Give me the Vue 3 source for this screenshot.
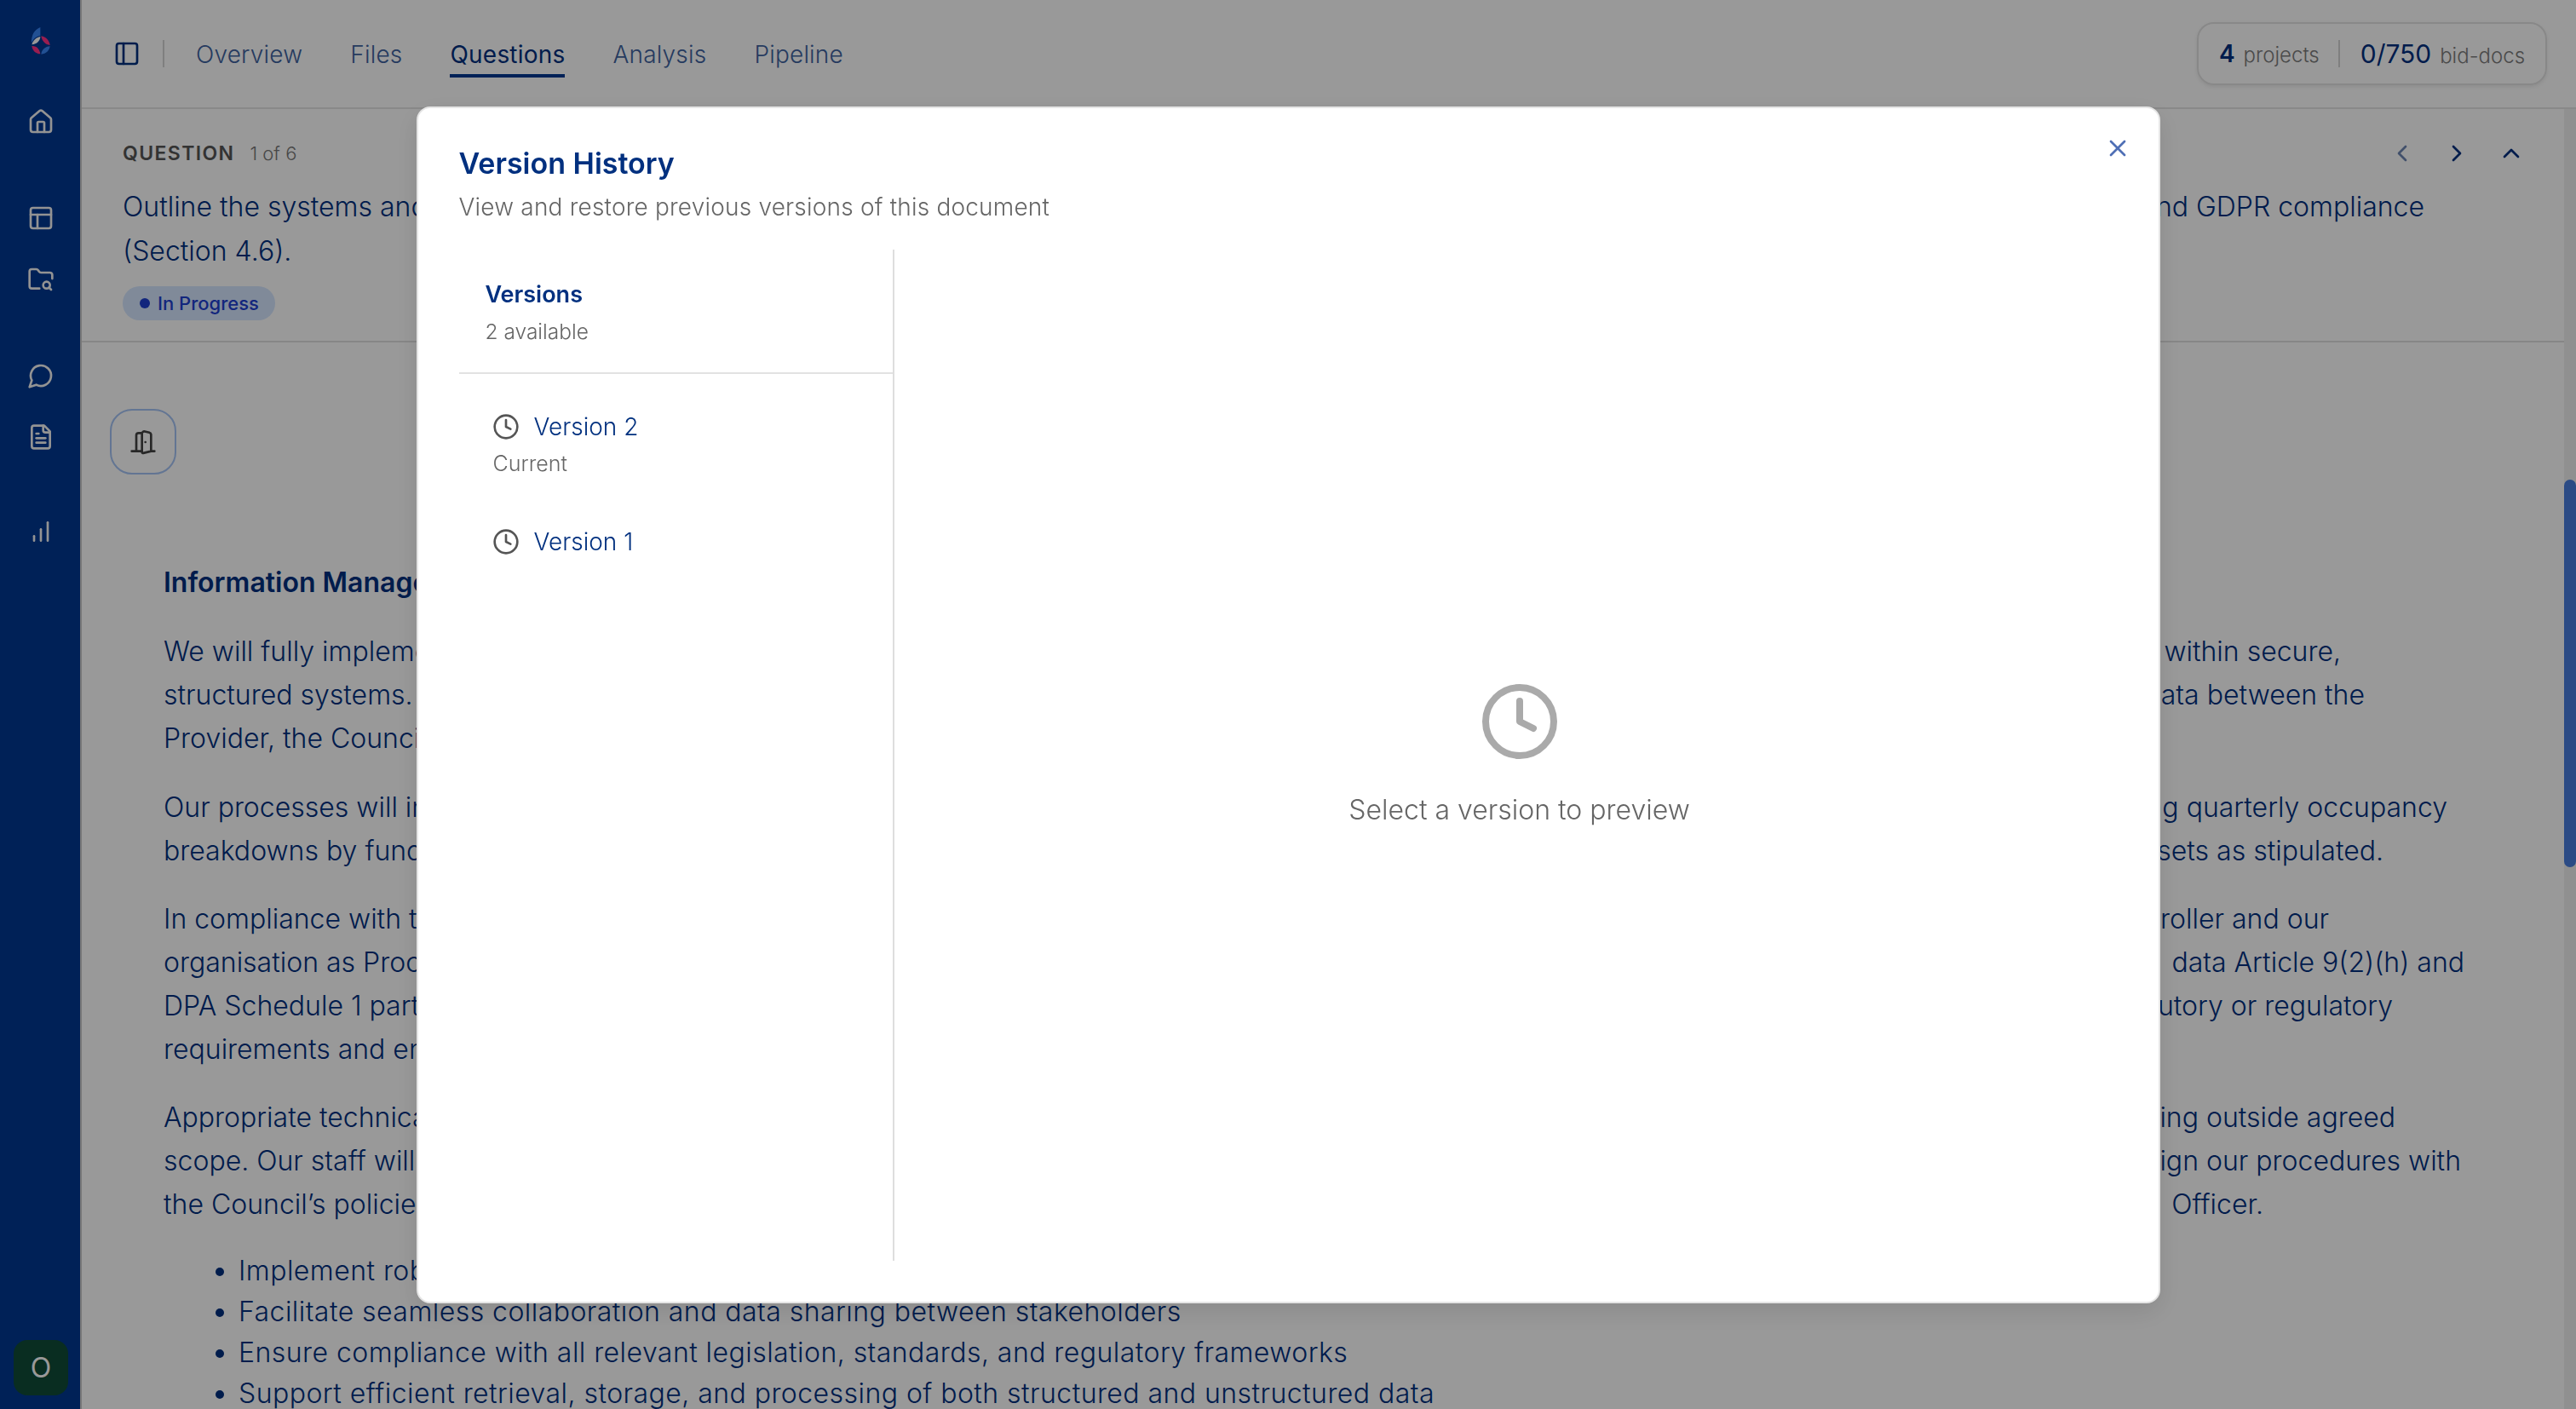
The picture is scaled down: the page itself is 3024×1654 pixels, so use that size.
<script setup>
const tabs = ['Overview', 'Files', 'Questions', 'Analysis', 'Pipeline']
const paragraphs = [
  [
    { l: 'We will fully implement', r: 'within secure,', end: 2748 },
    { l: 'structured systems. We', r: 'data between the', end: 2776 },
    { l: 'Provider, the Council', r: '', end: 2776 }
  ],
  [
    { l: 'Our processes will include', r: 'ing quarterly occupancy', end: 2873 },
    { l: 'breakdowns by funding', r: 'assets as stipulated.', end: 2798 }
  ],
  [
    { l: 'In compliance with the', r: 'Controller and our', end: 2734 },
    { l: 'organisation as Processor', r: 'data Article 9(2)(h) and', end: 2893 },
    { l: 'DPA Schedule 1 part', r: 'statutory or regulatory', end: 2809 },
    { l: 'requirements and ensure', r: '', end: 2809 }
  ],
  [
    { l: 'Appropriate technical', r: 'sing outside agreed', end: 2812 },
    { l: 'scope. Our staff will', r: 'align our procedures with', end: 2889 },
    { l: 'the Council’s policies', r: 'Officer.', end: 2657 }
  ]
]
const bullets = [
  'Implement robust systems',
  'Facilitate seamless collaboration and data sharing between stakeholders',
  'Ensure compliance with all relevant legislation, standards, and regulatory frameworks',
  'Support efficient retrieval, storage, and processing of both structured and unstructured data'
]
const pad = (end, edge = 3024) => ({ paddingRight: edge - end + 'px' })
</script>

<template>
  <div class="app">
    <aside class="sidebar">
      <div class="logo">
        <svg width="80" height="80" viewBox="0 0 240 240">
          <path d="M112 66C92 74 80 92 81 122C86 108 98 98 112 96Z" fill="#3a86f5" />
          <path d="M82 127C86 112 97 102 112 99C112 112 100 126 82 127Z" fill="#fff" />
          <path d="M115 97C132 99 143 112 146 129C130 128 117 114 115 97Z" fill="#ff3285" />
          <path d="M82 132C100 131 110 144 112 160C96 160 84 148 82 132Z" fill="#ff3285" />
          <path d="M146 133C144 148 132 160 115 161C116 146 130 133 146 133Z" fill="#3a86f5" />
        </svg>
      </div>
      <nav class="side-nav">
        <div class="side-group">
          <span class="side-item"><svg class="i32" viewBox="0 0 24 24"><path d="M15 21v-8a1 1 0 0 0-1-1h-4a1 1 0 0 0-1 1v8" /><path d="M3 10a2 2 0 0 1 .709-1.528l7-5.999a2 2 0 0 1 2.582 0l7 5.999A2 2 0 0 1 21 10v9a2 2 0 0 1-2 2H5a2 2 0 0 1-2-2z" /></svg></span>
        </div>
        <div class="side-group">
          <span class="side-item"><svg class="i32" viewBox="0 0 24 24"><rect x="3" y="3" width="18" height="18" rx="2" /><path d="M3 9h18" /><path d="M9 21V9" /></svg></span>
          <span class="side-item"><svg class="i32" viewBox="0 0 24 24"><path d="M10.7 20H4a2 2 0 0 1-2-2V5a2 2 0 0 1 2-2h3.9a2 2 0 0 1 1.69.9l.81 1.2a2 2 0 0 0 1.67.9H20a2 2 0 0 1 2 2v3.3" /><circle cx="17" cy="17" r="3" /><path d="m21 21-1.9-1.9" /></svg></span>
        </div>
        <div class="side-group">
          <span class="side-item"><svg class="i32" viewBox="0 0 24 24"><path d="M7.9 20A9 9 0 1 0 4 16.1L2 22Z" /></svg></span>
          <span class="side-item"><svg class="i32" viewBox="0 0 24 24"><path d="M15 2H6a2 2 0 0 0-2 2v16a2 2 0 0 0 2 2h12a2 2 0 0 0 2-2V7Z" /><path d="M14 2v4a2 2 0 0 0 2 2h4" /><path d="M10 9H8" /><path d="M16 13H8" /><path d="M16 17H8" /></svg></span>
        </div>
        <div class="side-group side-last">
          <span class="side-item"><svg class="i32" viewBox="0 0 24 24"><path d="M6 20v-4" /><path d="M12 20v-10" /><path d="M18 20V4" /></svg></span>
        </div>
      </nav>
      <div class="avatar">O</div>
    </aside>

    <main class="main">
      <header class="topbar">
        <svg class="i32 dark" viewBox="0 0 24 24"><rect x="3" y="3" width="18" height="18" rx="2" /><path d="M9 3v18" /></svg>
        <span class="top-sep"></span>
        <nav class="tabs">
          <a v-for="t in tabs" :key="t" class="tab" :class="{ active: t === 'Questions' }">{{ t }}</a>
        </nav>
        <div class="stats">
          <span class="stat"><b class="num">4</b> <span class="unit">projects</span></span>
          <span class="stat-sep"></span>
          <span class="stat"><span class="num wide">0/750</span> <span class="unit">bid-docs</span></span>
        </div>
      </header>

      <section class="question">
        <div class="q-head">
          <div class="q-label"><span class="q-word">QUESTION</span><span class="q-count">1 of 6</span></div>
          <div class="q-arrows">
            <svg class="i32 muted" viewBox="0 0 24 24"><path d="m15 18-6-6 6-6" /></svg>
            <svg class="i32 dark" viewBox="0 0 24 24"><path d="m9 18 6-6-6-6" /></svg>
            <svg class="i32 dark" viewBox="0 0 24 24"><path d="m18 15-6-6-6 6" /></svg>
          </div>
        </div>
        <div class="q-title">
          <div class="row" :style="pad(2846, 2964)"><span>Outline the systems and</span><span>and GDPR compliance</span></div>
          <div class="row"><span>(Section 4.6).</span></div>
        </div>
        <span class="pill"><i class="dot"></i>In Progress</span>
      </section>

      <section class="content">
        <button class="door">
          <svg class="i32" viewBox="0 0 24 24"><path d="M11 20H2" /><path d="M11 4.562v16.157a1 1 0 0 0 1.242.97L19 20V5.562a2 2 0 0 0-1.515-1.94l-4-1A2 2 0 0 0 11 4.561z" /><path d="M11 4H8a2 2 0 0 0-2 2v14" /><path d="M14 12h.01" /><path d="M22 20h-3" /></svg>
        </button>
        <article class="doc">
          <h3 class="doc-h">Information Management</h3>
          <div v-for="(p, i) in paragraphs" :key="i" class="para">
            <div v-for="(ln, j) in p" :key="j" class="row" :style="pad(ln.end)">
              <span>{{ ln.l }}</span><span>{{ ln.r }}</span>
            </div>
          </div>
          <ul class="list">
            <li v-for="b in bullets" :key="b">{{ b }}</li>
          </ul>
        </article>
      </section>
      <div class="scroll-track"><div class="scroll-thumb"></div></div>
    </main>

    <div class="overlay">
      <div class="modal">
        <svg class="close" viewBox="0 0 24 24"><path d="M18 6 6 18" /><path d="m6 6 12 12" /></svg>
        <h2 class="m-title">Version History</h2>
        <p class="m-sub">View and restore previous versions of this document</p>
        <div class="m-body">
          <div class="m-left">
            <div class="v-head">
              <div class="v-h-title">Versions</div>
              <div class="v-h-sub">2 available</div>
            </div>
            <div class="v-list">
              <div class="v-item">
                <div class="v-line">
                  <svg class="i32 grey" viewBox="0 0 24 24"><circle cx="12" cy="12" r="10" /><path d="M12 6v6l4 2" /></svg>
                  <span>Version 2</span>
                </div>
                <div class="v-sub">Current</div>
              </div>
              <div class="v-item">
                <div class="v-line">
                  <svg class="i32 grey" viewBox="0 0 24 24"><circle cx="12" cy="12" r="10" /><path d="M12 6v6l4 2" /></svg>
                  <span>Version 1</span>
                </div>
              </div>
            </div>
          </div>
          <div class="m-right">
            <svg class="big-clock" viewBox="0 0 24 24"><circle cx="12" cy="12" r="10" /><path d="M12 6v6l4 2" /></svg>
            <p class="m-hint">Select a version to preview</p>
          </div>
        </div>
      </div>
    </div>
  </div>
</template>

<style>
html, body { margin: 0; padding: 0; background: #fff; }
</style>

<style scoped>
* { box-sizing: border-box; }
.app {
  width: 3024px; height: 1654px; display: flex; overflow: hidden;
  font-family: Inter, "Liberation Sans", sans-serif; font-weight: 300; color: #00307f; background: #fff;
}
svg { fill: none; stroke: currentColor; stroke-width: 2; stroke-linecap: round; stroke-linejoin: round; flex: none; }
.i32 { width: 32px; height: 32px; }
.dark { color: #00307f; }
.muted { color: #6f86b2; }
.grey { color: #555; }

.sidebar {
  width: 96px; flex: none; background: #003791; border-right: 2px solid #c8c8c8;
  display: flex; flex-direction: column; color: #f5f5f5;
}
.logo { height: 96px; padding: 10px 0 0 10px; }
.logo svg { stroke: none; display: block; }
.side-nav { margin-top: 11px; display: flex; flex-direction: column; gap: 41px; }
.side-group { display: flex; flex-direction: column; }
.side-last { margin-top: -2px; }
.side-item { height: 72px; width: 96px; display: flex; align-items: center; justify-content: center; }
.avatar {
  margin: auto 0 16px 16px; width: 64px; height: 65px; border-radius: 16px;
  background: #104c38; color: #fff; display: flex; align-items: center; justify-content: center;
  font-size: 32px; font-weight: 400;
}

.main { flex: 1; min-width: 0; display: flex; flex-direction: column; position: relative; }
.topbar {
  height: 128px; flex: none; display: flex; align-items: center; padding: 0 34px 0 37px;
  border-bottom: 2px solid #e5e5e5;
}
.top-sep { width: 2px; height: 32px; background: #d4d4d4; margin: 0 37px 0 26px; }
.tabs { display: flex; gap: 56px; }
.tab {
  font-size: 28px; letter-spacing: .2px; line-height: 40px; color: #3f639f; padding: 3px 0 3px; border-bottom: 4px solid transparent;
  position: relative; top: 3px;
}
.tab.active { color: #00307f; border-bottom-color: #003791; font-weight: 400; }
.stats {
  margin-left: auto; height: 74px; width: 411px; display: flex; align-items: center;
  padding: 0 24px; border: 2px solid #e3e3e3; border-radius: 20px; box-shadow: 0 2px 4px rgba(0,0,0,.08);
}
.stat { white-space: nowrap; font-size: 28px; flex: none; }
.num { color: #00307f; font-size: 28px; font-weight: 400; }
.num.wide { font-size: 30px; }
b.num { font-weight: 600; }
.unit { color: #7c7c7c; font-size: 24px; margin-left: 2px; }
.stat-sep { width: 2px; height: 32px; background: #d4d4d4; margin: 0 24px 0 22px; flex: none; }

.question { flex: none; height: 274px; padding: 34px 60px 0 48px; border-bottom: 2px solid #e0e0e0; }
.q-head { display: flex; justify-content: space-between; height: 36px; align-items: center; }
.q-label { display: flex; align-items: baseline; gap: 18px; }
.q-word { font-size: 23px; font-weight: 600; letter-spacing: 1.4px; color: #555; }
.q-count { font-size: 22px; color: #777; }
.q-arrows { display: flex; gap: 32px; }
.q-title { margin-top: 19px; font-size: 32px; line-height: 52px; }
.row { display: flex; justify-content: space-between; white-space: nowrap; }
.pill {
  margin-top: 15px; display: inline-flex; align-items: center; height: 40px; padding: 0 19px 0 20px;
  border-radius: 20px; background: #d5e6ff; color: #1e40d0; font-size: 22px; font-weight: 500;
}
.dot { width: 12px; height: 12px; border-radius: 50%; background: currentColor; margin-right: 9px; }

.content { flex: 1; min-height: 0; padding: 78px 0 0 33px; }
.door {
  display: flex; align-items: center; justify-content: center; width: 78px; height: 77px; padding: 0;
  background: transparent; border: 2px solid #a5c4f5; border-radius: 26px; color: #444;
}
.doc { margin-top: 101px; padding-left: 63px; font-size: 32px; line-height: 51px; }
.doc-h { margin: 0 0 30px; font-size: 32px; line-height: 51px; font-weight: 600; color: #00307f; }
.para { margin-bottom: 29px; }
.para:first-of-type { margin-bottom: 30px; }
.list { margin: 0; padding: 0 0 0 88px; list-style: disc; line-height: 48px; letter-spacing: .45px; }
.list li { white-space: nowrap; }
.scroll-track { position: absolute; top: 128px; right: 0; bottom: 0; width: 14px; background: #f0f0f0; }
.scroll-thumb { margin-top: 435px; height: 455px; border-radius: 7px; background: #487dde; }

.overlay {
  position: fixed; inset: 0; background: rgba(0,0,0,.4);
  display: flex; align-items: center; justify-content: center;
}
.modal {
  position: relative; width: 2047px; height: 1405px; background: #fff; border-radius: 16px;
  border: 2px solid #e5e5e5; box-shadow: 0 10px 30px rgba(0,0,0,.1);
  padding: 43px 16px 48px 48px; display: flex; flex-direction: column;
}
.close { position: absolute; top: 31px; right: 32px; width: 32px; height: 32px; color: #4f6fb5; }
.m-title { margin: 0; font-size: 34px; line-height: 44px; font-weight: 600; color: #00307f; }
.m-sub { margin: 8px 0 0; font-size: 28px; letter-spacing: .2px; line-height: 42px; color: #666; }
.m-body { flex: 1; min-height: 0; margin-top: 29px; display: flex; }
.m-left { width: 511px; flex: none; border-right: 2px solid #dedede; }
.v-head { height: 146px; padding: 32px 32px 0 31px; border-bottom: 2px solid #e2e2e2; }
.v-h-title { font-size: 27px; line-height: 42px; font-weight: 600; color: #00307f; }
.v-h-sub { font-size: 24.5px; line-height: 36px; margin-top: 4px; color: #666; }
.v-list { padding: 0 40px; }
.v-item { padding-top: 44px; }
.v-item + .v-item { padding-top: 56px; }
.v-line { display: flex; align-items: center; gap: 17px; height: 36px; margin-left: -1px; font-size: 28px; color: #00307f; }
.v-sub { margin-top: 7px; font-size: 25px; line-height: 36px; color: #666; }
.m-right { flex: 1; display: flex; flex-direction: column; align-items: center; justify-content: center; }
.big-clock { width: 96px; height: 96px; color: #aaa; }
.m-hint { margin: 34px 0 0; font-size: 32px; line-height: 44px; color: #666; }
</style>
